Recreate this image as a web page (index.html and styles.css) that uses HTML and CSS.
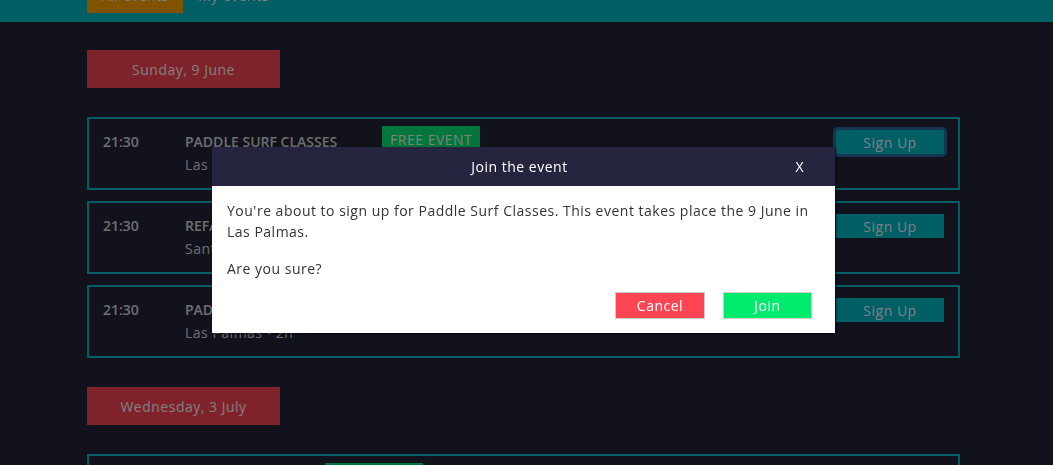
FILE: index.html
```html
<!DOCTYPE html>
<html lang="en">
<head>
<meta charset="utf-8">
<title>Events</title>
<link rel="stylesheet" href="styles.css">
</head>
<body>
<header class="topbar">
  <nav class="tabs">
    <button class="tab tab-active">All events</button>
    <button class="tab">My events</button>
  </nav>
</header>
<main class="events">
  <section class="day">
    <h2 class="day-label">Sunday, 9 June</h2>
    <ul class="event-list">
      <li class="event">
        <span class="event-time">21:30</span>
        <div class="event-info">
          <div class="event-head">
            <span class="event-title">PADDLE SURF CLASSES</span>
            <span class="badge">FREE EVENT</span>
          </div>
          <span class="event-meta">Las Palmas - 2h</span>
        </div>
        <button class="signup signup-focus">Sign Up</button>
      </li>
      <li class="event">
        <span class="event-time">21:30</span>
        <div class="event-info">
          <div class="event-head">
            <span class="event-title">REFA SUNSET PARTY</span>
          </div>
          <span class="event-meta">Santa Cruz - 3h</span>
        </div>
        <button class="signup">Sign Up</button>
      </li>
      <li class="event">
        <span class="event-time">21:30</span>
        <div class="event-info">
          <div class="event-head">
            <span class="event-title">PADDLE SURF CLASSES</span>
          </div>
          <span class="event-meta">Las Palmas - 2h</span>
        </div>
        <button class="signup">Sign Up</button>
      </li>
    </ul>
  </section>
  <section class="day">
    <h2 class="day-label">Wednesday, 3 July</h2>
    <ul class="event-list">
      <li class="event">
        <span class="event-time">10:00</span>
        <div class="event-info">
          <div class="event-head">
            <span class="event-title">SUNSET YOGA</span>
            <span class="badge">FREE EVENT</span>
          </div>
          <span class="event-meta">Las Palmas - 3h</span>
        </div>
        <button class="signup">Sign Up</button>
      </li>
    </ul>
  </section>
</main>
<div class="backdrop"></div>
<div class="modal" role="dialog">
  <div class="modal-head">
    <span class="modal-title">Join the event</span>
    <button class="modal-close">X</button>
  </div>
  <div class="modal-body">
    <p class="modal-text">You're about to sign up for Paddle Surf Classes. This event takes place the 9 June in Las Palmas.</p>
    <p class="modal-text">Are you sure?</p>
    <div class="modal-actions">
      <button class="btn btn-cancel">Cancel</button>
      <button class="btn btn-join">Join</button>
    </div>
  </div>
</div>
</body>
</html>
```
FILE: styles.css
```css
* { box-sizing: border-box; }
html, body { margin: 0; padding: 0; }
body {
  background: #24243a;
  font-family: "Open Sans", "Noto Sans", sans-serif;
  font-size: 14px;
  letter-spacing: 0.5px;
  color: #fff;
  height: 465px;
  overflow: hidden;
}
button { font-family: inherit; font-size: 14px; letter-spacing: inherit; cursor: pointer; }

.topbar {
  background: #00bdcb;
  height: 22px;
  display: flex;
  align-items: flex-end;
  overflow: hidden;
  padding: 0 0 9px 87px;
}
.tabs { display: flex; align-items: center; gap: 15px; }
.tab {
  height: 36px;
  border: 0;
  background: transparent;
  color: #fff;
  padding: 0;
}
.tab-active { background: #ffa600; width: 96px; }

.events {
  width: 873px;
  margin-left: 87px;
  padding-top: 28px;
}
.day-label {
  margin: 0;
  width: 193px;
  height: 38px;
  background: #ff4553;
  color: #fff;
  font-weight: 400;
  font-size: 14px;
  display: flex;
  align-items: center;
  justify-content: center;
}
.event-list {
  list-style: none;
  margin: 29px 0 29px;
  padding: 0;
  display: flex;
  flex-direction: column;
  gap: 11px;
}
.event {
  height: 73px;
  border: 2px solid #00bdcb;
  display: flex;
  align-items: flex-start;
  padding: 12px 14px 0 14px;
}
.event-time {
  width: 82px;
  font-weight: 600;
  letter-spacing: 0;
  line-height: 22px;
  color: #ddd;
}
.event-info { flex: 1; display: flex; flex-direction: column; gap: 1px; }
.event-head { display: flex; align-items: flex-start; gap: 45px; height: 22px; }
.event-title { font-weight: 600; letter-spacing: 0; color: #ddd; line-height: 22px; }
.event-meta { color: #ddd; line-height: 22px; }
.badge {
  margin-top: -5px;
  background: #00ef74;
  color: #fff;
  width: 98px;
  height: 27px;
  display: flex;
  align-items: center;
  justify-content: center;
}
.signup {
  margin-top: -1px;
  width: 108px;
  height: 24px;
  border: 0;
  background: #00bdcb;
  color: #fff;
  padding: 0;
}
.signup-focus { box-shadow: 0 0 0 3px #2d6aa8; border-radius: 2px; }

.backdrop {
  position: fixed;
  inset: 0;
  background: rgba(0, 0, 0, 0.5);
}

.modal {
  position: absolute;
  left: 212px;
  top: 147px;
  width: 623px;
  background: #fff;
  box-shadow: 1px 1px 2px rgba(0, 0, 0, 0.7);
}
.modal-head {
  height: 39px;
  background: #25253f;
  display: grid;
  grid-template-columns: 1fr auto 1fr;
  align-items: center;
}
.modal-title { grid-column: 2; color: #fff; padding-right: 8px; }
.modal-close {
  grid-column: 3;
  justify-self: end;
  margin-right: 31px;
  border: 0;
  background: transparent;
  color: #fff;
  padding: 0;
}
.modal-body { padding: 14px 17px 14px 15px; color: #333; }
.modal-text { margin: 0 0 16px; line-height: 21px; }
.modal-actions {
  display: flex;
  justify-content: flex-end;
  gap: 18px;
  margin: -3px 6px 0 0;
}
.btn {
  width: 90px;
  height: 27px;
  border: 1px solid #ccc;
  color: #fff;
  padding: 0;
}
.btn-cancel { background: #ff4553; }
.btn-join { background: #00ea6d; width: 89px; }
```
